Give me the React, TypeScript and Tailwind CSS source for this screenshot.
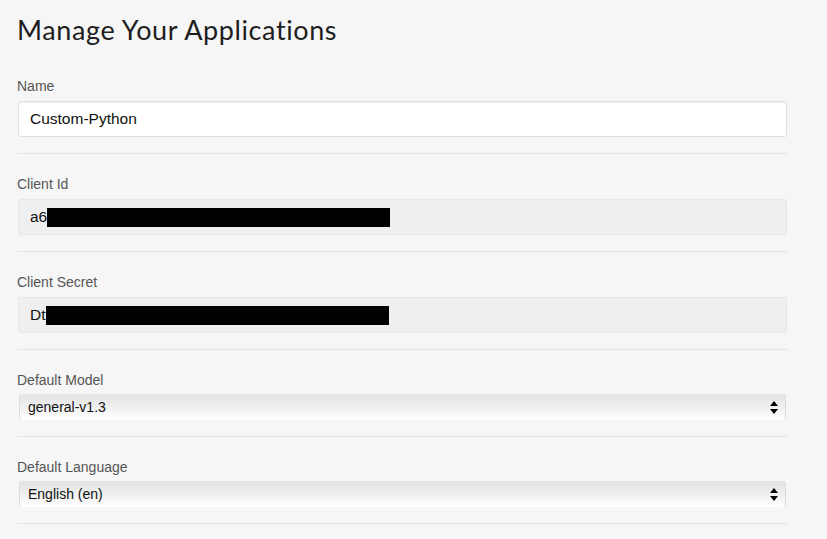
import type { ReactNode } from 'react'

const labelCls = 'block h-5 leading-5 text-[14px] text-[#555] font-["Liberation_Sans",Arial,sans-serif]'

function Divider() {
    return <div className="h-px bg-[#e4e4e4] mt-4 mb-5" />
}

function Field({ label, children, gap = 'mb-[5px]' }: { label: string; children: ReactNode; gap?: string }) {
    return (
        <div>
            <label className={`${labelCls} ${gap}`}>{label}</label>
            {children}
            <Divider />
        </div>
    )
}

function TextBox({ value, disabled, redact }: { value: string; disabled?: boolean; redact?: number }) {
    return (
        <div
            className={`ml-px mr-px h-9 rounded-[3px] border flex items-center pl-[11px] text-[15.5px] text-[#111] font-["Liberation_Sans",Arial,sans-serif] ${
                disabled ? 'bg-[#efefef] border-[#e6e6e6]' : 'bg-white border-[#dedede] shadow-[inset_0_1px_1px_rgba(0,0,0,0.06)]'
            }`}
        >
            <span>{value}</span>
            {redact ? <span className="h-[19px] bg-black" style={{ width: redact }} /> : null}
        </div>
    )
}

function SelectBox({ value }: { value: string }) {
    return (
        <div className="relative ml-[2px] mr-[2px] h-[26px]">
            <select
                defaultValue={value}
                className="block appearance-none w-full h-[26px] rounded-[3px] border-x border-[#dcdcdc] bg-gradient-to-b from-[#e4e4e4] via-[#efefef] to-white pl-[8px] text-[14px] text-[#111] font-['Liberation_Sans',Arial,sans-serif] outline-none"
            >
                <option>{value}</option>
            </select>
            <svg className="absolute right-[8px] top-[7px]" width="8" height="13" viewBox="0 0 8 13">
                <path d="M4 0 L8 5 L0 5 Z" fill="#000" />
                <path d="M4 13 L8 8 L0 8 Z" fill="#000" />
            </svg>
        </div>
    )
}

export default function App() {
    return (
        <div className="min-h-screen bg-[#f6f6f6]">
            <div className="w-[771px] ml-[17px]">
                {/* ── Title ───────────────────────────── */}
                <h1 className="pt-3 h-12 leading-9 text-[27px] text-[#1e1e1e] font-['Lato',sans-serif] tracking-[0.6px] mb-7">
                    Manage Your Applications
                </h1>

                <Field label="Name">
                    <TextBox value="Custom-Python" />
                </Field>

                <Field label="Client Id">
                    <TextBox value="a6" disabled redact={343} />
                </Field>

                <Field label="Client Secret">
                    <TextBox value="Dt" disabled redact={343} />
                </Field>

                <Field label="Default Model" gap="mb-1">
                    <SelectBox value="general-v1.3" />
                </Field>

                <Field label="Default Language" gap="mb-1">
                    <SelectBox value="English (en)" />
                </Field>
            </div>
        </div>
    )
}
